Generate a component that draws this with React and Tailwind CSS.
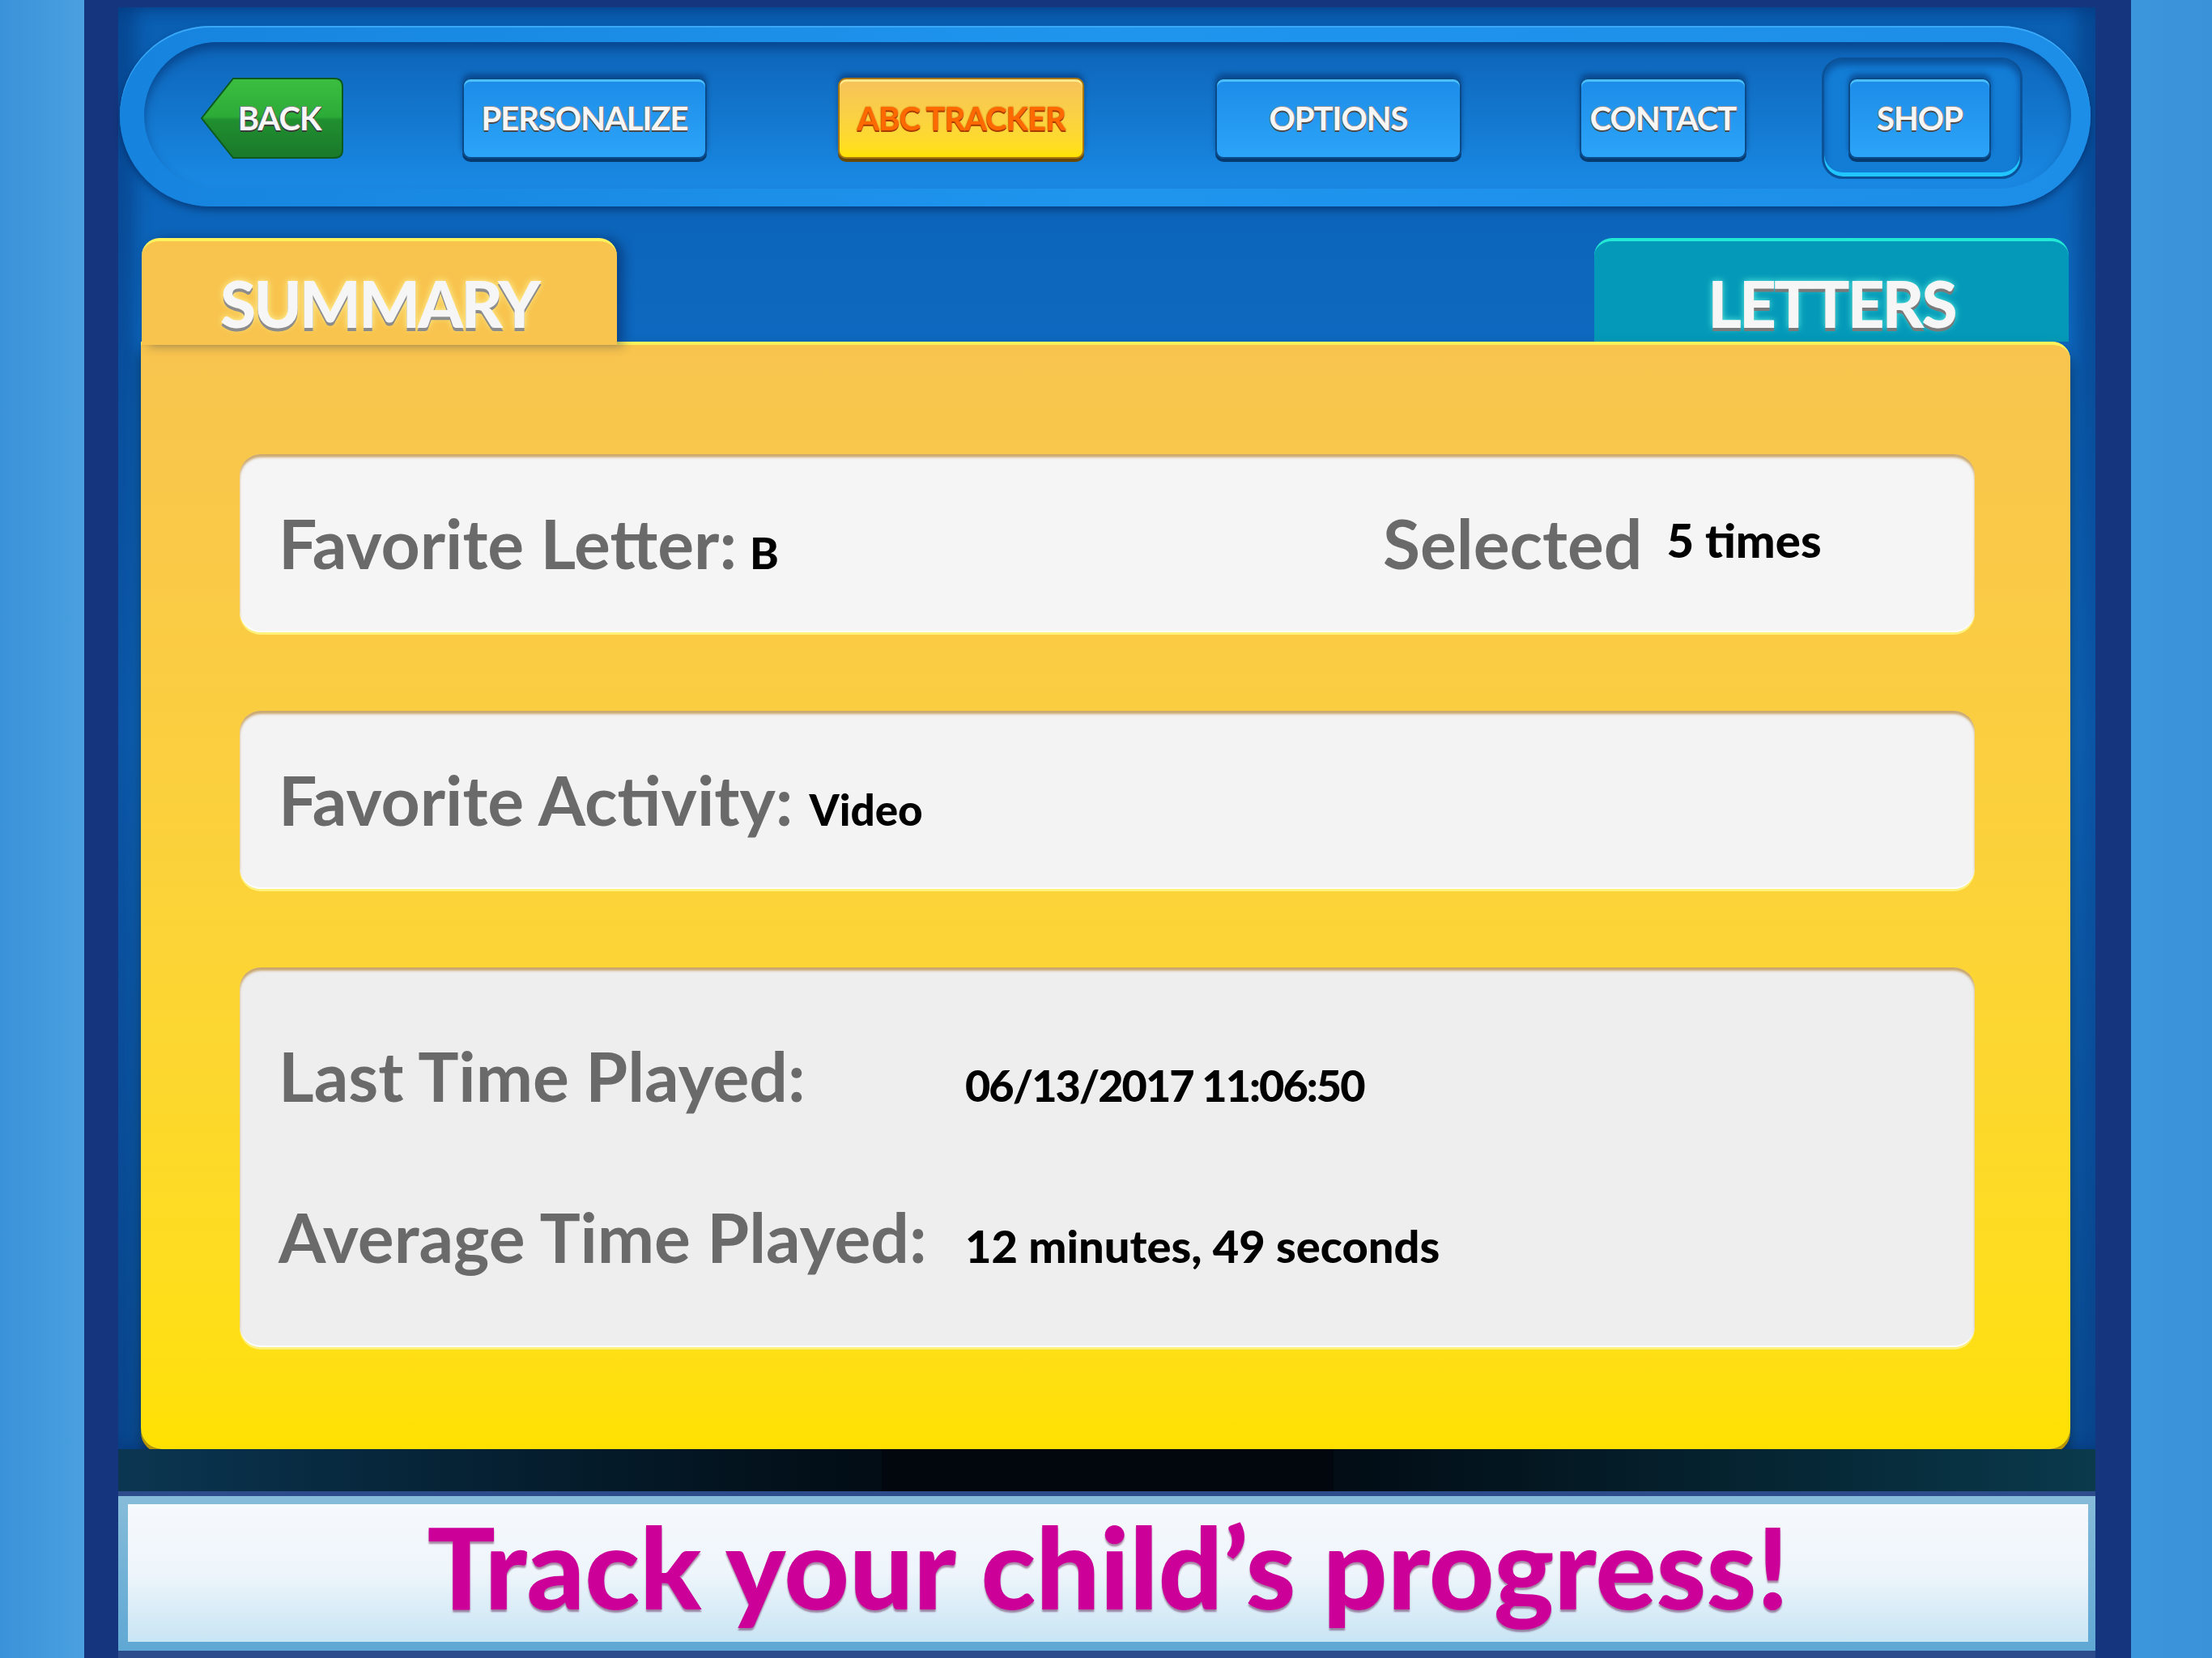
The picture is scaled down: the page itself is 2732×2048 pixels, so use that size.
import React from 'react';

const label = "text-[84px] font-bold leading-none text-[#6a6a6a]";
const value = "font-black leading-none text-black";
const navText = "text-[40px] font-bold leading-none tracking-tight";

function NavButton({ children, className }) {
  return (
    <div className={"flex h-[100px] items-center justify-center rounded-[10px] border-2 border-[#0a4a88] bg-linear-to-b from-[#1c8ce8] to-[#2ca4f8] shadow-[inset_0_3px_0_#4cc0ff,0_-5px_6px_rgba(4,45,105,0.55),0_4px_0_#073b70] " + className}>
      <span className={navText + " text-[#f7f7f7] [text-shadow:0_2px_0_#4a4a4a,0_-1px_0_#9a9a9a,1px_0_0_#777,-1px_0_0_#777]"}>{children}</span>
    </div>
  );
}

function BackButton() {
  return (
    <div className="grid h-[100px] w-[176px]">
      <svg className="[grid-area:1/1]" width="176" height="100" viewBox="0 0 176 100">
        <defs>
          <linearGradient id="backGreen" x1="0" y1="0" x2="0" y2="1">
            <stop offset="0" stopColor="#3cbe40" />
            <stop offset="0.48" stopColor="#2cab38" />
            <stop offset="0.52" stopColor="#20902f" />
            <stop offset="1" stopColor="#1a782b" />
          </linearGradient>
        </defs>
        <path d="M40 1 H165 Q175 1 175 11 V89 Q175 99 165 99 H40 L1 50 Z" fill="url(#backGreen)" stroke="#0d5a1f" strokeWidth="2" />
      </svg>
      <div className="flex items-center justify-center pl-[18px] [grid-area:1/1]">
        <span className={navText + " text-[#f7f7f7] [text-shadow:0_2px_0_#3a3a3a,0_-1px_0_#8a8a8a,1px_0_0_#555,-1px_0_0_#555]"}>BACK</span>
      </div>
    </div>
  );
}

function NavBar() {
  return (
    <div className="ml-[2px] mr-[6px] mt-[23px] h-[223px] rounded-full bg-linear-to-r from-[#1684de] via-[#1f95ee] to-[#1d8ee8] pb-[22px] pl-[30px] pr-[24px] pt-[20px] shadow-[0_5px_8px_rgba(0,30,80,0.5),inset_0_2px_0_#3aa8f6]">
      <div className="flex h-full items-center rounded-full bg-linear-to-b from-[#0d64b8] to-[#1a8ae4] pl-[70px] pt-[6px] shadow-[inset_0_8px_12px_rgba(0,40,100,0.5)]">
        <BackButton />
        <NavButton className="ml-[147px] w-[302px]">PERSONALIZE</NavButton>
        <div className="ml-[162px] flex h-[100px] w-[304px] items-center justify-center rounded-[10px] border-2 border-[#a8760c] bg-linear-to-b from-[#f6c25a] to-[#ffe200] shadow-[inset_0_3px_0_#ffe98a,0_-5px_6px_rgba(4,45,105,0.55),0_4px_0_#6a4a08]">
          <span className={navText + " text-[#ff6a00] [text-shadow:0_2px_0_#a83c00,0_0_2px_#c04800]"}>ABC TRACKER</span>
        </div>
        <NavButton className="ml-[162px] w-[304px]">OPTIONS</NavButton>
        <NavButton className="ml-[146px] w-[206px]">CONTACT</NavButton>
        <div className="ml-[93px] flex h-[150px] w-[248px] items-center justify-center rounded-[26px] border-[3px] border-[#0b5299] bg-[#137dd6] pr-[6px] shadow-[inset_0_-5px_0_#22c6ff,inset_0_6px_8px_rgba(0,40,100,0.5)]">
          <NavButton className="w-[176px]">SHOP</NavButton>
        </div>
      </div>
    </div>
  );
}

function Tabs() {
  return (
    <div className="ml-[28px] mr-[31px] mt-[39px] flex h-[128px] justify-between pl-[1px] pr-[2px]">
      <div className="relative z-10 -mb-[4px] flex h-[132px] w-[587px] justify-center rounded-t-[22px] border-t-[4px] border-[#fff35c] bg-[#f8c44e] pt-[36px] shadow-[8px_0_14px_rgba(0,25,80,0.45)]">
        <span className="text-[80px] font-black leading-none tracking-[-3px] text-[#f6f6f6] [text-shadow:0_4px_0_#8c8c8c,0_0_8px_#fff6a0]">SUMMARY</span>
      </div>
      <div className="flex h-[128px] w-[586px] justify-center rounded-t-[22px] border-t-[4px] border-[#22e8d6] bg-[#0499b8] pt-[36px]">
        <span className="text-[80px] font-black leading-none tracking-[-3px] text-[#f6f6f6] [text-shadow:0_4px_0_#7a7a7a,0_0_8px_#5ff0e0]">LETTERS</span>
      </div>
    </div>
  );
}

const card = "rounded-[26px] shadow-[inset_0_4px_3px_rgba(170,105,0,0.55),inset_0_-2px_0_rgba(255,255,255,0.8),0_3px_0_#fff17a]";

function Panel() {
  return (
    <div className="ml-[28px] mr-[31px] flex h-[1368px] flex-col gap-[97px] rounded-b-[26px] rounded-tr-[22px] border-t-[4px] border-[#fff35c] bg-linear-to-b from-[#f8c44e] to-[#ffe100] pl-[122px] pr-[118px] pt-[135px] shadow-[0_5px_0_#b99500,0_12px_18px_rgba(0,0,0,0.5)]">
      <div className={card + " grid h-[220px] grid-cols-[1364px_1fr] items-center bg-[#f5f5f5] pl-[48px]"}>
        <div>
          <span className={label}>Favorite Letter:</span>
          <span className={value + " ml-[16px] text-[54px]"}>B</span>
        </div>
        <div>
          <span className={label}>Selected</span>
          <span className={value + " ml-[30px] align-[14px] text-[58px]"}>5 times</span>
        </div>
      </div>
      <div className={card + " flex h-[220px] items-center bg-[#f3f3f3] pl-[48px]"}>
        <div>
          <span className={label}>Favorite Activity:</span>
          <span className={value + " ml-[20px] text-[53px]"}>Video</span>
        </div>
      </div>
      <div className={card + " flex h-[469px] flex-col gap-[115px] bg-[#eeeeee] pl-[48px] pt-[92px]"}>
        <div className="grid grid-cols-[848px_1fr] items-baseline">
          <span className={label}>Last Time Played:</span>
          <span className={value + " text-[54px] tracking-[-2px]"}>06/13/2017 11:06:50</span>
        </div>
        <div className="grid grid-cols-[848px_1fr] items-baseline">
          <span className={label}>Average Time Played:</span>
          <span className={value + " text-[56px]"}>12 minutes, 49 seconds</span>
        </div>
      </div>
    </div>
  );
}

function Banner() {
  return (
    <div className="bg-[#2c4c8c] pb-[9px] pt-[6px]">
      <div className="bg-linear-to-b from-[#86bcd9] to-[#5fa8d4] pb-[11px] pl-[12px] pr-[9px] pt-[10px]">
        <div className="flex h-[170px] justify-center bg-linear-to-b from-[#f6f9fd] via-[#eef5fb] to-[#c8e5f4] pt-[6px]">
          <span className="text-[140px] font-black leading-none text-[#cc0099] [text-shadow:0_3px_2px_rgba(80,0,60,0.45)]">Track your child’s progress!</span>
        </div>
      </div>
    </div>
  );
}

export default function App() {
  return (
    <div className="flex h-[2048px] w-[2732px] overflow-hidden bg-[#3d95da] font-['Lato',sans-serif]">
      <div className="w-[104px] bg-linear-to-r from-[#3a92d8] to-[#4aa0e0]" />
      <div className="flex w-[2528px] flex-col bg-[#15367e] pl-[42px] pr-[44px] pt-[9px]">
        <div className="flex h-[1781px] flex-col bg-linear-to-b from-[#0a5fb2] via-[#1174ce] to-[#0d5aa6] shadow-[inset_22px_0_20px_rgba(0,30,90,0.35),inset_-22px_0_20px_rgba(0,30,90,0.35)]">
          <NavBar />
          <Tabs />
          <Panel />
        </div>
        <div className="flex h-[52px]">
          <div className="w-[943px] bg-linear-to-r from-[#0b3652] to-[#020c14]" />
          <div className="w-[558px] bg-[#01070c]" />
          <div className="flex-1 bg-linear-to-r from-[#020c14] to-[#0a3a4c]" />
        </div>
        <Banner />
      </div>
      <div className="flex-1 bg-linear-to-r from-[#3c96dc] to-[#3a92d8]" />
    </div>
  );
}
